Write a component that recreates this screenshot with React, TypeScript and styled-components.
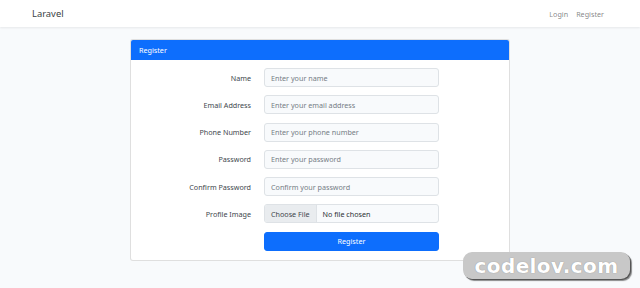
import React from 'react'
import styled, { createGlobalStyle } from 'styled-components'

const GlobalStyle = createGlobalStyle`
  html, body {
    margin: 0;
    padding: 0;
    background: #f8fafc;
    font-family: 'Noto Sans', 'Open Sans', sans-serif;
    font-size: 7.2px;
    color: #212529;
  }
`

const Page = styled.div`
  position: relative;
  width: 640px;
  height: 288px;
  overflow: hidden;
`

const Navbar = styled.nav`
  height: 27px;
  background: #fff;
  box-shadow: 0 1px 2px rgba(0, 0, 0, 0.075);
  display: flex;
  align-items: center;
  justify-content: space-between;
  padding: 0 36px 0 32px;
`

const Brand = styled.a`
  font-size: 9.4px;
  color: #3a3f44;
  text-decoration: none;
`

const NavLinks = styled.div`
  display: flex;
  gap: 8px;
`

const NavLink = styled.a`
  color: rgba(0, 0, 0, 0.5);
  text-decoration: none;
`

const Card = styled.div`
  width: 380px;
  margin: 12px auto 0;
  background: #fff;
  border: 1px solid rgba(0, 0, 0, 0.125);
  border-radius: 3px;
  box-sizing: border-box;
  overflow: hidden;
`

const CardHeader = styled.div`
  height: 20px;
  background: #0d6efd;
  color: #fff;
  display: flex;
  align-items: center;
  padding: 0 8px;
`

const CardBody = styled.div`
  padding: 8px 7px 9px;
  display: flex;
  flex-direction: column;
  gap: 8.3px;
`

const Row = styled.div`
  display: grid;
  grid-template-columns: 113px 175px;
  column-gap: 13px;
  align-items: center;
`

const Label = styled.label`
  text-align: right;
  color: #41474d;
`

const Input = styled.input`
  box-sizing: border-box;
  height: 19px;
  width: 100%;
  margin: 0;
  padding: 0 6px;
  border: 1px solid #dee2e6;
  border-radius: 3px;
  background: #f8fafc;
  font: inherit;
  color: #212529;
  outline: none;
  &::placeholder {
    color: #757d85;
  }
`

const FileBox = styled.div`
  box-sizing: border-box;
  height: 19px;
  display: flex;
  align-items: stretch;
  border: 1px solid #dee2e6;
  border-radius: 3px;
  background: #f8fafc;
  overflow: hidden;
`

const FileButton = styled.span`
  display: flex;
  align-items: center;
  padding: 0 6px;
  background: #e9ecef;
  border-right: 1px solid #dee2e6;
  color: #41474d;
`

const FileName = styled.span`
  display: flex;
  align-items: center;
  padding: 0 6px;
  color: #2b3035;
`

const SubmitButton = styled.button`
  grid-column: 2;
  height: 19px;
  border: 1px solid #0d6efd;
  border-radius: 3px;
  background: #0d6efd;
  color: #fff;
  font: inherit;
  cursor: pointer;
`

const Watermark = styled.div`
  position: absolute;
  left: 463px;
  top: 252px;
  width: 167px;
  height: 27px;
  box-sizing: border-box;
  border-radius: 9px;
  background: #c8c8c8;
  box-shadow: 1px 1px 0 #555, 2px 2px 1px rgba(0, 0, 0, 0.45);
  display: flex;
  align-items: center;
  justify-content: center;
  font-family: 'DejaVu Sans', sans-serif;
  font-weight: 700;
  font-size: 20px;
  letter-spacing: 0.4px;
  color: #fff;
  text-shadow: 0 0 1px rgba(0, 0, 0, 0.35);
`

const fields = [
  { label: 'Name', placeholder: 'Enter your name', type: 'text' },
  { label: 'Email Address', placeholder: 'Enter your email address', type: 'email' },
  { label: 'Phone Number', placeholder: 'Enter your phone number', type: 'text' },
  { label: 'Password', placeholder: 'Enter your password', type: 'password' },
  { label: 'Confirm Password', placeholder: 'Confirm your password', type: 'password' },
]

const App = () => (
  <Page>
    <GlobalStyle />
    <Navbar>
      <Brand href="#">Laravel</Brand>
      <NavLinks>
        <NavLink href="#">Login</NavLink>
        <NavLink href="#">Register</NavLink>
      </NavLinks>
    </Navbar>
    <Card>
      <CardHeader>Register</CardHeader>
      <CardBody>
        {fields.map(f => (
          <Row key={f.label}>
            <Label>{f.label}</Label>
            <Input type={f.type} placeholder={f.placeholder} />
          </Row>
        ))}
        <Row>
          <Label>Profile Image</Label>
          <FileBox>
            <FileButton>Choose File</FileButton>
            <FileName>No file chosen</FileName>
          </FileBox>
        </Row>
        <Row>
          <SubmitButton type="button">Register</SubmitButton>
        </Row>
      </CardBody>
    </Card>
    <Watermark>codelov.com</Watermark>
  </Page>
)

export default App
